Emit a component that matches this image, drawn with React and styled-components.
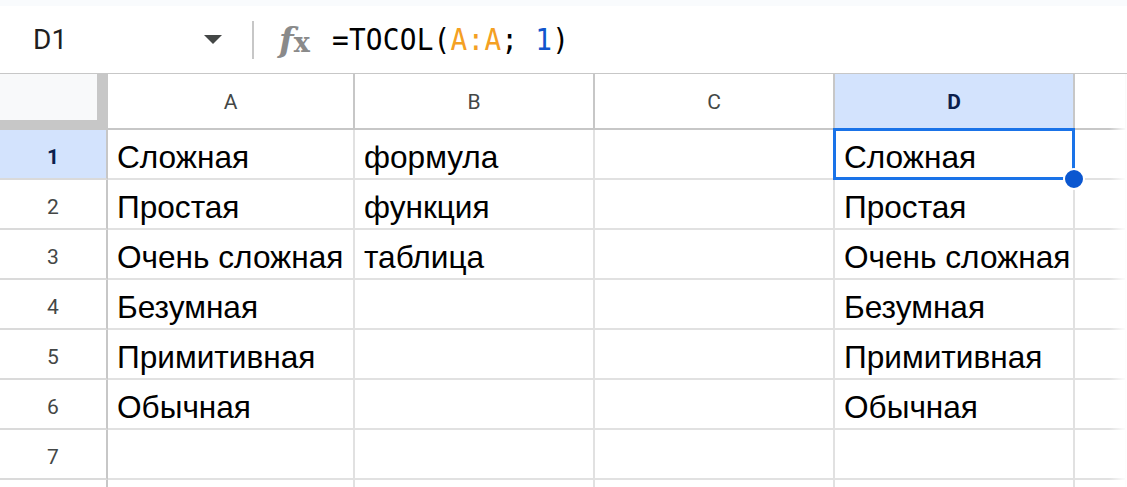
import React from "react";
import styled, { createGlobalStyle } from "styled-components";

const GlobalStyle = createGlobalStyle`
  html, body {
    margin: 0;
    padding: 0;
    background: #ffffff;
  }
  body {
    font-family: "Liberation Sans", Arial, sans-serif;
    overflow: hidden;
  }
`;

const columns = ["A", "B", "C", "D"];
const selectedCol = "D";
const selectedRow = 1;

const rows = [
  { A: "Сложная", B: "формула", D: "Сложная" },
  { A: "Простая", B: "функция", D: "Простая" },
  { A: "Очень сложная", B: "таблица", D: "Очень сложная" },
  { A: "Безумная", D: "Безумная" },
  { A: "Примитивная", D: "Примитивная" },
  { A: "Обычная", D: "Обычная" },
  {},
  {},
];

// only the first 7 rows are visible enough to show a number
const visibleLabels = 7;

function App() {
  return (
    <>
      <GlobalStyle />
      <Page>
        <TopStrip />
        <FormulaBar>
          <NameBox>
            <span>D1</span>
            <Caret />
          </NameBox>
          <Divider />
          <FxIcon>
            <i>f</i>
            <b>x</b>
          </FxIcon>
          <Formula>
            =TOCOL(<Ref>A:A</Ref>; <Num>1</Num>)
          </Formula>
        </FormulaBar>
        <Sheet>
          <Corner />
          {columns.map((c) => (
            <ColHeader key={c} $active={c === selectedCol}>
              {c}
            </ColHeader>
          ))}
          <ColHeader />
          {rows.map((r, i) => (
            <React.Fragment key={i}>
              <RowHeader $active={i + 1 === selectedRow}>
                {i < visibleLabels ? i + 1 : ""}
              </RowHeader>
              {columns.map((c) => (
                <Cell key={c} $selected={c === selectedCol && i + 1 === selectedRow}>
                  {r[c]}
                  {c === selectedCol && i + 1 === selectedRow && <Handle />}
                </Cell>
              ))}
              <Cell />
            </React.Fragment>
          ))}
          <EdgeFade />
        </Sheet>
      </Page>
    </>
  );
}

const Page = styled.div`
  width: 1127px;
  height: 487px;
  overflow: hidden;
  display: flex;
  flex-direction: column;
`;

const TopStrip = styled.div`
  height: 6px;
  background: #f9fbfd;
  flex-shrink: 0;
`;

const FormulaBar = styled.div`
  height: 67px;
  flex-shrink: 0;
  border-bottom: 1px solid #c7c7c7;
  display: flex;
  align-items: center;
  background: #fff;
`;

const NameBox = styled.div`
  width: 252px;
  box-sizing: border-box;
  padding: 0 30px 0 33px;
  display: flex;
  align-items: center;
  justify-content: space-between;
  font-family: Roboto, "Liberation Sans", sans-serif;
  font-size: 28px;
  color: #1f1f1f;
`;

const Caret = styled.div`
  width: 0;
  height: 0;
  border-left: 9px solid transparent;
  border-right: 9px solid transparent;
  border-top: 9px solid #444746;
`;

const Divider = styled.div`
  width: 2px;
  height: 38px;
  background: #c7c7c7;
`;

const FxIcon = styled.div`
  margin-left: 25px;
  width: 40px;
  display: flex;
  align-items: baseline;
  font-family: "DejaVu Serif", "Liberation Serif", serif;
  color: #8a8a8a;
  line-height: 1;
  i {
    font-style: italic;
    font-weight: 700;
    font-size: 34px;
  }
  b {
    font-weight: 700;
    font-size: 27px;
  }
`;

const Formula = styled.div`
  margin-left: 13px;
  font-family: "DejaVu Sans Mono", "Liberation Mono", monospace;
  font-size: 27.8px;
  letter-spacing: 0.2px;
  color: #000;
  transform: scaleY(1.08);
`;

const Ref = styled.span`
  color: #f4a023;
`;

const Num = styled.span`
  color: #1155cc;
`;

const Sheet = styled.div`
  position: relative;
  display: grid;
  grid-template-columns: 108px 247px 240px 240px 240px 1fr;
  grid-template-rows: 56px;
  grid-auto-rows: 50px;
`;

const Corner = styled.div`
  box-sizing: border-box;
  background: #f8f9fa;
  border-right: 11px solid #c7c7c7;
  border-bottom: 10px solid #c7c7c7;
`;

const ColHeader = styled.div`
  box-sizing: border-box;
  display: flex;
  align-items: center;
  justify-content: center;
  padding-top: 2px;
  border-right: 2px solid #c7c7c7;
  border-bottom: 2px solid #c7c7c7;
  background: ${(p) => (p.$active ? "#d3e3fd" : "#ffffff")};
  color: ${(p) => (p.$active ? "#0b1f4d" : "#444746")};
  font-weight: ${(p) => (p.$active ? 700 : 400)};
  font-family: Roboto, "Liberation Sans", sans-serif;
  font-size: 21px;
`;

const RowHeader = styled.div`
  box-sizing: border-box;
  display: flex;
  align-items: center;
  justify-content: center;
  padding-top: 5px;
  border-right: 2px solid #c7c7c7;
  border-bottom: 2px solid #dadada;
  background: ${(p) => (p.$active ? "#d3e3fd" : "#ffffff")};
  color: ${(p) => (p.$active ? "#0b1f4d" : "#444746")};
  font-weight: ${(p) => (p.$active ? 700 : 400)};
  font-family: Roboto, "Liberation Sans", sans-serif;
  font-size: 21px;
`;

const Cell = styled.div`
  position: relative;
  box-sizing: border-box;
  display: flex;
  align-items: center;
  padding: 7px 0 0 9px;
  border-right: 2px solid #e1e1e1;
  border-bottom: 2px solid #e1e1e1;
  font-size: 31.6px;
  color: #000;
  white-space: nowrap;
  ${(p) =>
    p.$selected &&
    `
    &::after {
      content: "";
      position: absolute;
      left: -2px;
      top: -2px;
      right: -2px;
      bottom: -2px;
      border: 3px solid #1a73e8;
      pointer-events: none;
    }
  `}
`;

const Handle = styled.span`
  position: absolute;
  right: -12px;
  bottom: -12px;
  width: 18px;
  height: 18px;
  border-radius: 50%;
  background: #0b57d0;
  border: 2px solid #ffffff;
  z-index: 2;
`;

const EdgeFade = styled.div`
  position: absolute;
  top: 0;
  right: 0;
  bottom: 0;
  width: 18px;
  background: linear-gradient(to right, rgba(255, 255, 255, 0), #ffffff);
  pointer-events: none;
`;

export default App;
